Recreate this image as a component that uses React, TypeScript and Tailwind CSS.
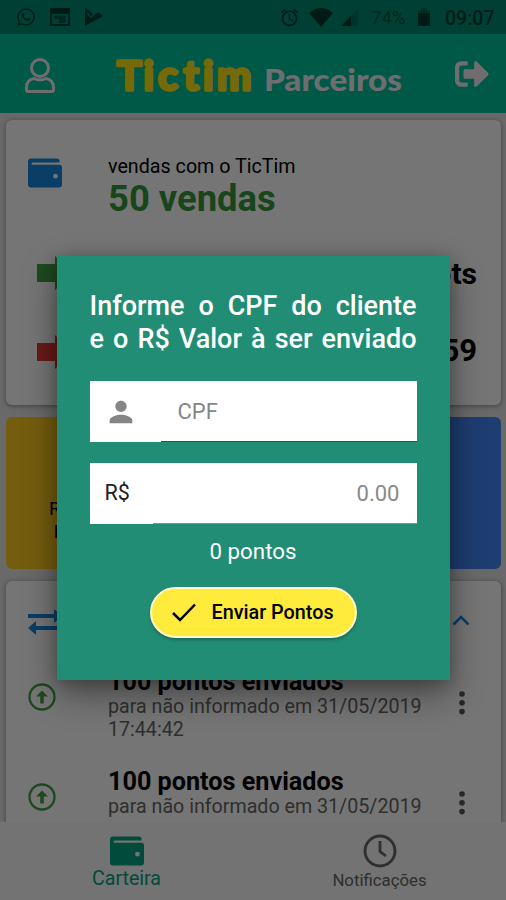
import React from "react";
import { FaWhatsapp, FaSignOutAlt } from "react-icons/fa";
import { MdPerson, MdAlarm } from "react-icons/md";

const WalletIcon = ({ className }: { className: string }) => (
  <svg viewBox="0 0 34 29" className={className} fill="currentColor">
    <path
      fillRule="evenodd"
      d="M3 0h26q2.500 0 2.500 2.500V4H5q-1.500 0-1.500 1.200T5 6.200h26.500q2.500 0 2.500 2.500V26q0 3-3 3H3q-3 0-3-3V3q0-3 3-3Zm24.500 15.300a2.400 2.400 0 1 0 0 4.800 2.400 2.400 0 1 0 0-4.800Z"
    />
  </svg>
);

const StatusBar = () => (
  <div className="flex h-[34px] items-center bg-[#008a70] px-4 text-[#003c31]">
    <FaWhatsapp className="h-5 w-5 shrink-0" />
    <svg viewBox="0 0 20 18" className="ml-[14px] h-[18px] w-5 shrink-0" fill="currentColor">
      <path fillRule="evenodd" d="M0 0h20v18H0ZM2 6v10h16V6Z" />
      <path d="M4 7.500h12V15H9v-4H4Z" opacity=".6" />
    </svg>
    <svg viewBox="0 0 18 18" className="ml-[15px] h-[18px] w-[18px] shrink-0" fill="currentColor">
      <path d="M0 0 5 3 8 7l5-3 5 4L0 18Z" />
      <path d="m2 5 4 4 8-7" fill="none" stroke="#008a70" strokeWidth="1.500" />
    </svg>
    <MdAlarm className="ml-[176px] h-[21px] w-[21px] shrink-0" />
    <svg viewBox="0 0 24 19" className="ml-[9px] h-[19px] w-6 shrink-0" fill="currentColor">
      <path d="M0 5Q12-5 24 5L12 19Z" />
    </svg>
    <svg viewBox="0 0 17 17" className="ml-2 h-[17px] w-[17px] shrink-0" fill="currentColor">
      <path d="M0 17 17 0v17Z" opacity=".3" />
      <path d="M0 17 10 7v10Z" />
    </svg>
    <span className="mt-1 ml-[13px] w-[37px] shrink-0 text-[18.500px] opacity-70">74%</span>
    <svg viewBox="0 0 12 18" className="ml-[10px] h-[18px] w-3 shrink-0" fill="currentColor">
      <path d="M3 0h6v2h3v3H0V2h3Z" opacity=".4" />
      <path d="M0 5h12v13H0Z" />
    </svg>
    <span className="mt-1 ml-[15px] text-[19.500px] font-medium">09:07</span>
  </div>
);

const Header = () => (
  <div className="flex h-[79px] items-center bg-[#00c39b] px-[25px] text-[#f2eef2]">
    <svg viewBox="0 0 30 35" className="mt-1 h-[35px] w-[30px] shrink-0" fill="none" stroke="currentColor" strokeWidth="3">
      <circle cx="15" cy="10" r="8.500" />
      <path d="M9 20.500Q1.500 21.500 1.500 30v1.500q0 2 2 2h23q2 0 2-2V30q0-8.500-7.500-9.500-3 1.600-6 1.600t-6-1.600Z" strokeLinejoin="round" />
    </svg>
    <svg viewBox="0 0 300 60" className="ml-[60px] h-[60px] w-[300px] shrink-0">
      <text x="2 28.500 43 68.500 88 102" y="45.500" fontSize="41" fontFamily="Lato" fontWeight="700" fill="#ffe414" stroke="#ffe414" strokeWidth="3.400" strokeLinejoin="round">
        Tictim
      </text>
      <text x="149" y="47" fontSize="31" fontFamily="Lato" fontWeight="900" textLength="138" lengthAdjust="spacingAndGlyphs" fill="currentColor">
        Parceiros
      </text>
    </svg>
    <FaSignOutAlt className="ml-[40px] h-[34px] w-[34px] shrink-0" />
  </div>
);

const BlockArrow = ({ className }: { className: string }) => (
  <svg viewBox="0 0 36 34" className={className} fill="currentColor">
    <path d="M0 8h18V0l18 17-18 17v-8H0Z" />
  </svg>
);

const SalesCard = () => (
  <div className="h-[285px] rounded-md bg-white pr-[24px] pl-[22px] shadow-[0_1px_5px_rgba(0,0,0,0.4)]">
    <div className="flex h-[111px] pt-[34px]">
      <WalletIcon className="mt-[4px] h-[30px] w-[34px] text-[#1687de]" />
      <div className="ml-[46px]">
        <div className="text-[19.700px] leading-[25px]">vendas com o TicTim</div>
        <div className="text-[36.400px] leading-[40px] font-bold text-[#38963c]">50 vendas</div>
      </div>
    </div>
    <div className="flex h-[84px] items-center justify-between pl-[9px]">
      <BlockArrow className="h-[34px] w-9 text-[#43a047]" />
      <span className="text-[30px] font-bold">pts</span>
    </div>
    <div className="flex h-[73px] items-center justify-between pl-[9px]">
      <BlockArrow className="h-[34px] w-9 text-[#e53935]" />
      <span className="text-[31px] font-bold">59</span>
    </div>
  </div>
);

const Tiles = () => (
  <div className="flex h-[152px] gap-3">
    <div className="flex-1 rounded-md bg-[#ffcb22] pt-[80px] pl-[43px] text-[19px] leading-[23px]">
      <div>R</div>
      <div className="pl-[5px] font-bold">P</div>
    </div>
    <div className="flex-1 rounded-md bg-[#4285f4]" />
  </div>
);

const entries = [
  { title: "100 pontos enviados", lines: ["para não informado em 31/05/2019", "17:44:42"] },
  { title: "100 pontos enviados", lines: ["para não informado em 31/05/2019"] },
];

const History = () => (
  <div className="flex-1 overflow-hidden rounded-t-md bg-white px-[22px] shadow-[0_1px_5px_rgba(0,0,0,0.4)]">
    <div className="flex h-[87px] items-center justify-between pr-[9px] pb-[5px] text-[#1687de]">
      <svg viewBox="0 0 34 26" className="h-[26px] w-[34px]" fill="currentColor">
        <path d="M0 5h26V0l8 7-8 7V9H0Z" />
        <path d="M34 21H8v5l-8-7 8-7v5h26Z" />
      </svg>
      <svg viewBox="0 0 18 11" className="mb-1 h-[11px] w-[18px]" fill="none" stroke="currentColor" strokeWidth="2.500">
        <path d="m1.500 9.500 7.500-7.500 7.500 7.500" />
      </svg>
    </div>
    {entries.map((entry, idx) => (
      <div key={idx} className="flex h-[100px]">
        <svg viewBox="0 0 28 28" className="mt-[15px] h-7 w-7 text-[#43a047]">
          <circle cx="14" cy="14" r="12.500" fill="none" stroke="currentColor" strokeWidth="2.300" />
          <path d="M14 7.500 20 13.500h-4.200v7h-3.600v-7H8Z" fill="currentColor" />
        </svg>
        <div className="ml-[52px] flex-1">
          <div className="text-[25.200px] leading-[28px] font-bold">{entry.title}</div>
          {entry.lines.map((line) => (
            <div key={line} className="text-[19.650px] leading-[22.500px] text-[#666]">
              {line}
            </div>
          ))}
        </div>
        <svg viewBox="0 0 6 26" className="mt-[22px] mr-[14px] h-[26px] w-[6px] text-[#555]" fill="currentColor">
          <circle cx="3" cy="4" r="2.800" />
          <circle cx="3" cy="12.800" r="2.800" />
          <circle cx="3" cy="21.600" r="2.800" />
        </svg>
      </div>
    ))}
  </div>
);

const BottomNav = () => (
  <div className="flex h-[78px] bg-[#fafafa] text-center">
    <div className="flex flex-1 flex-col items-center pt-[14px] text-[#00a380]">
      <WalletIcon className="h-[30px] w-[34px]" />
      <span className="text-[19.600px] leading-[26px]">Carteira</span>
    </div>
    <div className="flex flex-1 flex-col items-center pt-[12px] text-[#666]">
      <svg viewBox="0 0 34 34" className="h-[34px] w-[34px]" fill="none" stroke="currentColor" strokeWidth="2.800">
        <circle cx="17" cy="17" r="15" />
        <path d="M17 7v10.500l6 4.500" />
      </svg>
      <span className="text-[16.800px] leading-6">Notificações</span>
    </div>
  </div>
);

const SendDialog = () => (
  <div className="h-[424px] w-[393px] bg-[#218d74] px-[33px] pt-[34px] text-white shadow-[0_14px_32px_rgba(0,0,0,0.4),0_2px_14px_rgba(0,0,0,0.2)]">
    <div className="text-[27px] leading-[33px] font-medium">
      <div className="flex justify-between">
        {["Informe", "o", "CPF", "do", "cliente"].map((word) => (
          <span key={word}>{word}</span>
        ))}
      </div>
      <div className="flex justify-between whitespace-nowrap">
        {["e", "o", "R$", "Valor", "à", "ser", "enviado"].map((word) => (
          <span key={word}>{word}</span>
        ))}
      </div>
    </div>
    <div className="mt-[25px] flex h-[61px] items-center bg-white text-[22px] text-[#858585]">
      <div className="flex h-full w-[71px] items-center pl-[14px]">
        <MdPerson className="h-[34px] w-[34px]" />
      </div>
      <div className="flex h-full flex-1 items-center border-b border-[#17614f] pl-[17px]">CPF</div>
    </div>
    <div className="mt-[21px] flex h-[61px] items-center bg-white text-[22px]">
      <div className="w-[63px] pl-[15px] text-[21.500px] text-[#222]">R$</div>
      <div className="flex h-full flex-1 items-center justify-end border-b border-[#8d8d8d] pr-[17px] text-[#8a8a8a]">
        0.00
      </div>
    </div>
    <div className="mt-[12px] text-center text-[22.300px] leading-[30px]">0 pontos</div>
    <div className="mt-[21px] flex justify-center">
      <button className="flex h-[51px] w-[207px] items-center rounded-full border-2 border-[#fffbd0] bg-[#ffeb3b] pl-5 text-black shadow-[0_2px_3px_rgba(0,0,0,0.25)]">
        <svg viewBox="0 0 24 19" className="h-[19px] w-6" fill="none" stroke="currentColor" strokeWidth="2.500">
          <path d="m1 10 7 7L23 1.500" />
        </svg>
        <span className="ml-4 text-[19.800px] font-medium whitespace-nowrap">Enviar Pontos</span>
      </button>
    </div>
  </div>
);

export default function App() {
  return (
    <div className="relative h-[900px] w-[506px] overflow-hidden font-['Roboto',sans-serif] text-black">
      <div className="flex h-full flex-col bg-[#e4e4e4]">
        <StatusBar />
        <Header />
        <div className="flex min-h-0 flex-1 flex-col gap-3 overflow-hidden pt-[7px] pr-[5px] pl-[6px]">
          <SalesCard />
          <Tiles />
          <History />
        </div>
        <BottomNav />
      </div>
      <div className="absolute inset-0 flex justify-center bg-black/54 pt-[256px]">
        <SendDialog />
      </div>
    </div>
  );
}
